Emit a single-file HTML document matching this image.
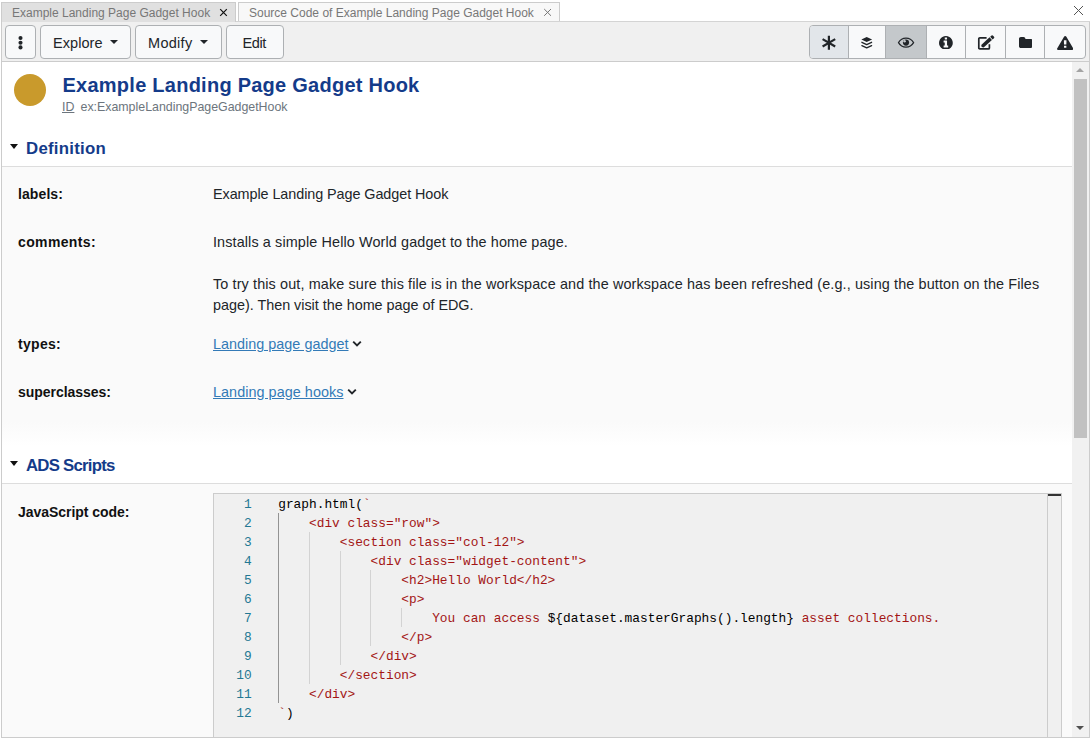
<!DOCTYPE html>
<html lang="en">
<head>
<meta charset="utf-8">
<title>Example Landing Page Gadget Hook</title>
<style>
*{box-sizing:border-box;margin:0;padding:0}
html,body{width:1091px;height:740px;overflow:hidden;background:#fff}
body{font-family:"Liberation Sans",sans-serif;font-size:14px;color:#212529;position:relative}
.a,.t{position:absolute}
.t{white-space:pre}
.btn{position:absolute;top:25px;height:34px;border:1px solid #adb0b3;border-radius:4px;background:#f8f9fa}
.ln{position:absolute;left:0;width:37.7px;text-align:right;color:#237893;height:19px;line-height:19px}
.cl{position:absolute;left:64.2px;height:19px;line-height:19px;white-space:pre;color:#000}
.s{color:#a31515}
.g{position:absolute;width:1px;background:#d3d3d3}
a{color:#337ab7;text-decoration:underline;text-underline-offset:1px}
</style>
</head>
<body>
<div class="a" style="left:236px;top:21px;width:854px;height:1px;background:#d4d4d4"></div>
<div class="a" style="left:1px;top:2px;width:235px;height:20px;background:#e0e0e0;border:1px solid #ccc;border-bottom:none"></div>
<div class="a" style="left:238px;top:2px;width:322px;height:19px;background:#f8f8f8;border:1px solid #ccc;border-bottom:none"></div>
<div class="t" style="left:12px;top:4px;font-size:12px;line-height:18px;color:#777;">Example Landing Page Gadget Hook</div>
<div class="t" style="left:249px;top:4px;font-size:12px;line-height:18px;color:#777;">Source Code of Example Landing Page Gadget Hook</div>
<svg class="a" style="left:219px;top:8px" width="9" height="9" viewBox="0 0 9 9"><path d="M1.2 1.2L7.8 7.8M7.8 1.2L1.2 7.8" stroke="#111" stroke-width="1.2" fill="none"/></svg>
<svg class="a" style="left:543px;top:8px" width="9" height="9" viewBox="0 0 9 9"><path d="M1.2 1L8 7.8M8 1L1.2 7.8" stroke="#777" stroke-width="1" fill="none"/></svg>
<svg class="a" style="left:1073px;top:5px" width="11" height="11" viewBox="0 0 11 11"><path d="M1 1L10 10M10 1L1 10" stroke="#555" stroke-width="1" fill="none"/></svg>
<div class="a" style="left:2px;top:22px;width:1087px;height:40px;background:#f0f0f0;border-bottom:1px solid #ccc"></div>
<div class="btn" style="left:5px;width:31px"></div>
<svg class="a" style="left:18px;top:35px" width="5" height="16" viewBox="0 0 5 16"><circle cx="2.5" cy="3" r="2.05" fill="#212529"/><circle cx="2.5" cy="7.7" r="2.05" fill="#212529"/><circle cx="2.5" cy="12.4" r="2.05" fill="#212529"/></svg>
<div class="btn" style="left:40px;width:91px"></div>
<div class="btn" style="left:135px;width:87px"></div>
<div class="btn" style="left:226px;width:58px"></div>
<div class="t" style="left:53px;top:32px;font-size:14.5px;line-height:22px;color:#212529;letter-spacing:0.047px;">Explore</div>
<div class="t" style="left:148px;top:32px;font-size:14.5px;line-height:22px;color:#212529;letter-spacing:0.297px;">Modify</div>
<div class="t" style="left:242.5px;top:32px;font-size:14.5px;line-height:22px;color:#212529;letter-spacing:-0.375px;">Edit</div>
<div class="a" style="left:110px;top:40px;width:0;height:0;border-left:4.5px solid transparent;border-right:4.5px solid transparent;border-top:4.5px solid #212529"></div>
<div class="a" style="left:200px;top:40px;width:0;height:0;border-left:4.5px solid transparent;border-right:4.5px solid transparent;border-top:4.5px solid #212529"></div>
<div class="a" style="left:809px;top:25px;width:277px;height:34px;border:1px solid #adb0b3;border-radius:4px;background:#f8f9fa;overflow:hidden"><div class="a" style="left:0;top:0;width:39px;height:32px;background:#e2e6ea;border-right:1px solid #adb0b3"></div><div class="a" style="left:39px;top:0;width:37px;height:32px;border-right:1px solid #adb0b3"></div><div class="a" style="left:76px;top:0;width:41px;height:32px;background:#c4c8cb;border-right:1px solid #adb0b3"></div><div class="a" style="left:117px;top:0;width:39px;height:32px;border-right:1px solid #adb0b3"></div><div class="a" style="left:156px;top:0;width:40px;height:32px;border-right:1px solid #adb0b3"></div><div class="a" style="left:196px;top:0;width:39px;height:32px;border-right:1px solid #adb0b3"></div></div>
<svg class="a" style="left:820px;top:34px" width="18" height="18" viewBox="820 34 18 18"><path d="M828.9 35.8V49.8M822.6 39.1L835.2 46.5M835.2 39.1L822.6 46.5" stroke="#212529" stroke-width="2.2" fill="none"/></svg>
<svg class="a" style="left:938.9px;top:35.7px" width="13.800000000000068" height="13.799999999999997" viewBox="0 -1408 1536 1536" preserveAspectRatio="none"><path transform="scale(1,-1)" fill="#212529" d="M1024 160V320Q1024 334 1015.0 343.0Q1006 352 992 352H896V864Q896 878 887.0 887.0Q878 896 864 896H544Q530 896 521.0 887.0Q512 878 512 864V704Q512 690 521.0 681.0Q530 672 544 672H640V352H544Q530 352 521.0 343.0Q512 334 512 320V160Q512 146 521.0 137.0Q530 128 544 128H992Q1006 128 1015.0 137.0Q1024 146 1024 160ZM896 1056V1216Q896 1230 887.0 1239.0Q878 1248 864 1248H672Q658 1248 649.0 1239.0Q640 1230 640 1216V1056Q640 1042 649.0 1033.0Q658 1024 672 1024H864Q878 1024 887.0 1033.0Q896 1042 896 1056ZM1433.0 1025.5Q1536 849 1536.0 640.0Q1536 431 1433.0 254.5Q1330 78 1153.5 -25.0Q977 -128 768.0 -128.0Q559 -128 382.5 -25.0Q206 78 103.0 254.5Q0 431 0.0 640.0Q0 849 103.0 1025.5Q206 1202 382.5 1305.0Q559 1408 768.0 1408.0Q977 1408 1153.5 1305.0Q1330 1202 1433.0 1025.5Z"/></svg>
<svg class="a" style="left:1018.6px;top:37px" width="13.800000000000068" height="10.899999999999999" viewBox="0 -1408 1664 1408" preserveAspectRatio="none"><path transform="scale(1,-1)" fill="#212529" d="M1664 928V224Q1664 132 1598.0 66.0Q1532 0 1440 0H224Q132 0 66.0 66.0Q0 132 0 224V1184Q0 1276 66.0 1342.0Q132 1408 224 1408H544Q636 1408 702.0 1342.0Q768 1276 768 1184V1152H1440Q1532 1152 1598.0 1086.0Q1664 1020 1664 928Z"/></svg>
<svg class="a" style="left:1057.1px;top:35.7px" width="16.40000000000009" height="14.0" viewBox="-1 -1536 1794 1664" preserveAspectRatio="none"><path transform="scale(1,-1)" fill="#212529" d="M1024 161V351Q1024 365 1014.5 374.5Q1005 384 992 384H800Q787 384 777.5 374.5Q768 365 768 351V161Q768 147 777.5 137.5Q787 128 800 128H992Q1005 128 1014.5 137.5Q1024 147 1024 161ZM1022 535 1040 994Q1040 1006 1030 1013Q1017 1024 1006 1024H786Q775 1024 762 1013Q752 1006 752 992L769 535Q769 525 779.0 518.5Q789 512 803 512H988Q1002 512 1011.5 518.5Q1021 525 1022 535ZM1008 1469 1776 61Q1811 -2 1774 -65Q1757 -94 1727.5 -111.0Q1698 -128 1664 -128H128Q94 -128 64.5 -111.0Q35 -94 18 -65Q-19 -2 16 61L784 1469Q801 1500 831.0 1518.0Q861 1536 896.0 1536.0Q931 1536 961.0 1518.0Q991 1500 1008 1469Z"/></svg>
<svg class="a" style="left:976px;top:34px" width="20" height="18" viewBox="976 34 20 18"><path d="M986.6 37.9H979.9A1 1 0 0 0 978.8 38.9V47.9A1 1 0 0 0 979.9 48.9H988.4A1 1 0 0 0 989.4 47.9V44.2" stroke="#212529" stroke-width="1.7" fill="none"/><g transform="translate(981.7,46.9) rotate(-42.2)" fill="#212529"><path d="M0 0L1 -1.8H12.2V1.8H1Z"/><path d="M13.1 -1.8H14.9A1.1 1.1 0 0 1 16 -0.7V0.7A1.1 1.1 0 0 1 14.9 1.8H13.1Z"/></g></svg>
<svg class="a" style="left:860px;top:35px" width="14" height="16" viewBox="860 35 14 16"><path d="M866.7 36.9L872.1 39.4L866.7 41.9L861.4 39.4Z" fill="#212529"/><path d="M861.9 42.3L866.7 44.6L871.6 42.3M861.9 45.6L866.7 47.9L871.6 45.6" stroke="#212529" stroke-width="1.3" fill="none" stroke-linejoin="round" stroke-linecap="round"/></svg>
<svg class="a" style="left:896px;top:35px" width="20" height="15" viewBox="896 35 20 15"><path d="M898.5 42.6C900.2 39.6 902.9 38.1 906 38.1S911.8 39.6 913.6 42.6C911.8 45.6 909.1 47.1 906 47.1S900.2 45.6 898.5 42.6Z" fill="none" stroke="#212529" stroke-width="1.2"/><circle cx="906" cy="42.6" r="3.1" fill="#212529"/><circle cx="904.6" cy="41.3" r="1.2" fill="#c4c8cb"/></svg>
<div class="a" style="left:2px;top:62px;width:1070px;height:676px;background:#fff"></div>
<div class="a" style="left:13.6px;top:73.5px;width:32.7px;height:32.7px;border-radius:50%;background:#c99a2c"></div>
<div class="t" style="left:62.5px;top:70px;font-size:20px;line-height:30px;color:#143b8a;font-weight:bold;letter-spacing:0.251px;">Example Landing Page Gadget Hook</div>
<div class="t" style="left:62px;top:98px;font-size:12.4px;line-height:19px;color:#6c757d;text-decoration:underline;text-underline-offset:1px;">ID</div>
<div class="t" style="left:80.5px;top:98px;font-size:12.4px;line-height:19px;color:#6c757d;letter-spacing:-0.011px;">ex:ExampleLandingPageGadgetHook</div>
<div class="a" style="left:2px;top:167px;width:1070px;height:279px;background:linear-gradient(#fafafa 0,#fafafa 91.4%,#fff 100%)"></div>
<div class="a" style="left:2px;top:484px;width:1070px;height:254px;background:#fafafa"></div>
<div class="a" style="left:2px;top:166px;width:1070px;height:1px;background:#ddd"></div>
<div class="a" style="left:10px;top:144px;width:0;height:0;border-left:4.3px solid transparent;border-right:4.3px solid transparent;border-top:5px solid #111"></div>
<div class="t" style="left:26px;top:136px;font-size:16.8px;line-height:25px;color:#143b8a;font-weight:bold;letter-spacing:0.263px;">Definition</div>
<div class="a" style="left:2px;top:483px;width:1070px;height:1px;background:#ddd"></div>
<div class="a" style="left:10px;top:461px;width:0;height:0;border-left:4.3px solid transparent;border-right:4.3px solid transparent;border-top:5px solid #111"></div>
<div class="t" style="left:26px;top:453px;font-size:16.8px;line-height:25px;color:#143b8a;font-weight:bold;letter-spacing:-0.762px;">ADS Scripts</div>
<div class="t" style="left:18px;top:184px;font-size:14px;line-height:21px;color:#111;font-weight:bold;letter-spacing:0.092px;">labels:</div>
<div class="t" style="left:18px;top:232px;font-size:14px;line-height:21px;color:#111;font-weight:bold;letter-spacing:0.368px;">comments:</div>
<div class="t" style="left:18px;top:334px;font-size:14px;line-height:21px;color:#111;font-weight:bold;letter-spacing:0.294px;">types:</div>
<div class="t" style="left:18px;top:382px;font-size:14px;line-height:21px;color:#111;font-weight:bold;letter-spacing:-0.031px;">superclasses:</div>
<div class="t" style="left:18px;top:502px;font-size:14px;line-height:21px;color:#111;font-weight:bold;letter-spacing:-0.035px;">JavaScript code:</div>
<div class="t" style="left:213px;top:183px;font-size:14.4px;line-height:22px;color:#212529;letter-spacing:-0.072px;">Example Landing Page Gadget Hook</div>
<div class="t" style="left:213px;top:231px;font-size:14.4px;line-height:22px;color:#212529;letter-spacing:0.120px;">Installs a simple Hello World gadget to the home page.</div>
<div class="t" style="left:213px;top:273px;font-size:14.4px;line-height:22px;color:#212529;letter-spacing:0.123px;">To try this out, make sure this file is in the workspace and the workspace has been refreshed (e.g., using the button on the Files</div>
<div class="t" style="left:213px;top:294px;font-size:14.4px;line-height:22px;color:#212529;letter-spacing:-0.021px;">page). Then visit the home page of EDG.</div>
<div class="t" style="left:213px;top:333px;font-size:14.4px;line-height:22px;color:#337ab7;letter-spacing:0.013px;"><a>Landing page gadget</a></div>
<div class="t" style="left:213px;top:381px;font-size:14.4px;line-height:22px;color:#337ab7;letter-spacing:0.048px;"><a>Landing page hooks</a></div>
<svg class="a" style="left:352px;top:340px" width="10" height="8" viewBox="0 0 10 8"><path d="M1.2 1.6L5 5.4L8.8 1.6" stroke="#212529" stroke-width="1.9" fill="none"/></svg>
<svg class="a" style="left:347px;top:388px" width="10" height="8" viewBox="0 0 10 8"><path d="M1.2 1.6L5 5.4L8.8 1.6" stroke="#212529" stroke-width="1.9" fill="none"/></svg>
<div class="a" style="left:213px;top:493px;width:849px;height:245px;background:#f0f0f0;border:1px solid #ccc;border-bottom:none;font-family:'Liberation Mono','DejaVu Sans Mono',monospace;font-size:12.83px;overflow:hidden"><div class="ln" style="top:1px">1</div><div class="cl" style="top:1px">graph.html(<span class="s">`</span></div><div class="ln" style="top:20px">2</div><div class="cl" style="top:20px"><span class="s">    &lt;div class="row"&gt;</span></div><div class="ln" style="top:39px">3</div><div class="cl" style="top:39px"><span class="s">        &lt;section class="col-12"&gt;</span></div><div class="ln" style="top:58px">4</div><div class="cl" style="top:58px"><span class="s">            &lt;div class="widget-content"&gt;</span></div><div class="ln" style="top:77px">5</div><div class="cl" style="top:77px"><span class="s">                &lt;h2&gt;Hello World&lt;/h2&gt;</span></div><div class="ln" style="top:96px">6</div><div class="cl" style="top:96px"><span class="s">                &lt;p&gt;</span></div><div class="ln" style="top:115px">7</div><div class="cl" style="top:115px"><span class="s">                    You can access </span>${dataset.masterGraphs().length}<span class="s"> asset collections.</span></div><div class="ln" style="top:134px">8</div><div class="cl" style="top:134px"><span class="s">                &lt;/p&gt;</span></div><div class="ln" style="top:153px">9</div><div class="cl" style="top:153px"><span class="s">            &lt;/div&gt;</span></div><div class="ln" style="top:172px">10</div><div class="cl" style="top:172px"><span class="s">        &lt;/section&gt;</span></div><div class="ln" style="top:191px">11</div><div class="cl" style="top:191px"><span class="s">    &lt;/div&gt;</span></div><div class="ln" style="top:210px">12</div><div class="cl" style="top:210px"><span class="s">`</span>)</div><div class="g" style="left:64px;top:19px;height:190px;background:#939393"></div><div class="g" style="left:95px;top:38px;height:152px;background:#d3d3d3"></div><div class="g" style="left:126px;top:57px;height:114px;background:#d3d3d3"></div><div class="g" style="left:156px;top:76px;height:76px;background:#d3d3d3"></div><div class="g" style="left:187px;top:114px;height:19px;background:#d3d3d3"></div><div class="a" style="left:833px;top:0;width:1px;height:245px;background:#ccc"></div><div class="a" style="left:834px;top:0;width:13px;height:2px;background:#333"></div></div>
<div class="a" style="left:1072px;top:62px;width:17px;height:676px;background:#f1f1f1"></div>
<div class="a" style="left:1074px;top:79px;width:13px;height:359px;background:#c1c1c1"></div>
<div class="a" style="left:1076px;top:68px;width:0;height:0;border-left:4.5px solid transparent;border-right:4.5px solid transparent;border-bottom:4.5px solid #a3a3a3"></div>
<div class="a" style="left:1076px;top:726px;width:0;height:0;border-left:4.5px solid transparent;border-right:4.5px solid transparent;border-top:4.5px solid #505050"></div>
<div class="a" style="left:1px;top:22px;width:1089px;height:716px;border:1px solid #ccc;border-top:none"></div>
</body>
</html>
